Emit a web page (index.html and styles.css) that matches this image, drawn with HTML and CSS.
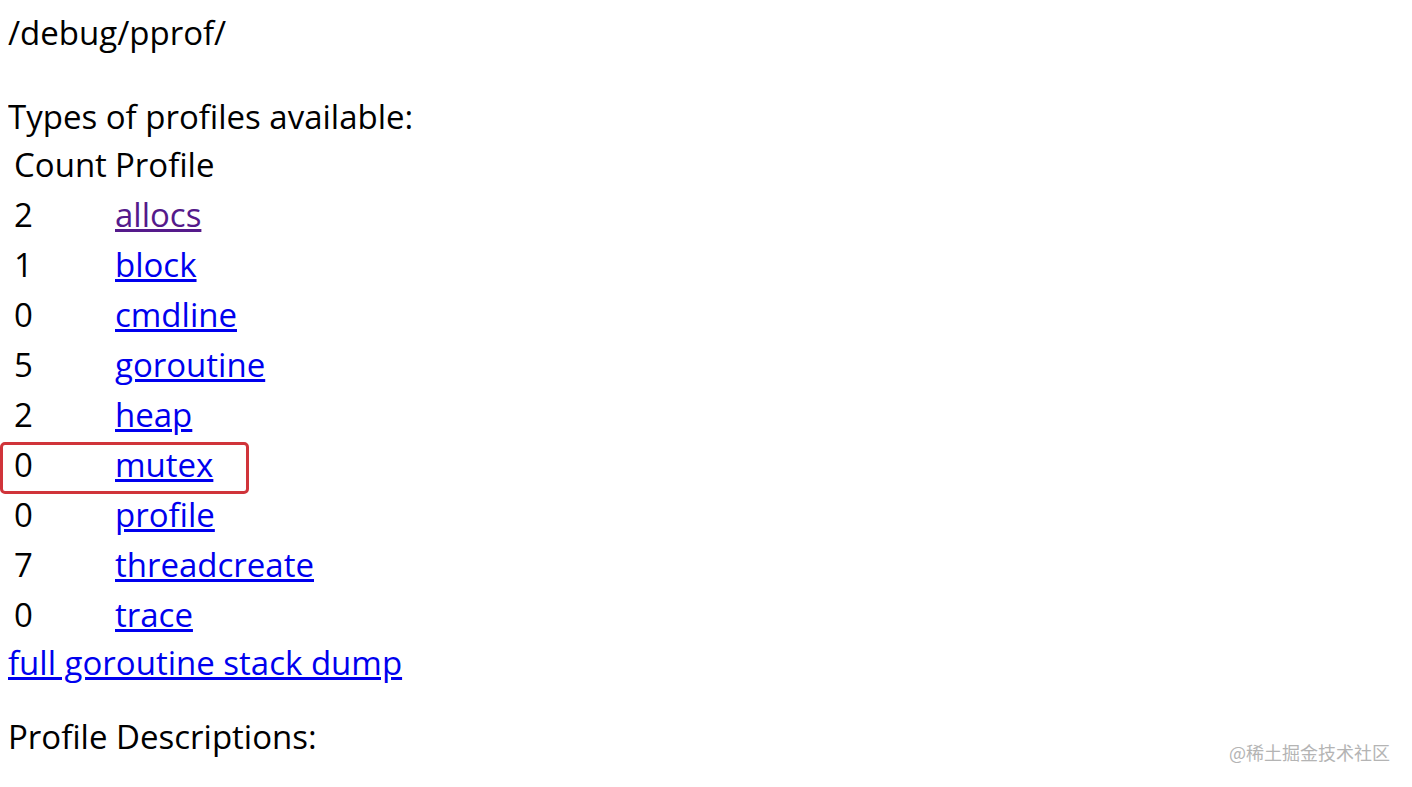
FILE: index.html
```html
<!DOCTYPE html>
<html lang="en">
    <head>
        <meta charset="UTF-8" />
        <title>/debug/pprof/</title>
        <link rel="stylesheet" href="styles.css">
    </head>
    <body>
        /debug/pprof/<br>
        <br>
        Types of profiles available:
        <table class="profiles">
            <thead>
                <tr><td class="count">Count</td><td>Profile</td></tr>
            </thead>
            <tbody>
                <tr><td class="count">2</td><td><a class="visited" href="#allocs">allocs</a></td></tr>
                <tr><td class="count">1</td><td><a href="#block">block</a></td></tr>
                <tr><td class="count">0</td><td><a href="#cmdline">cmdline</a></td></tr>
                <tr><td class="count">5</td><td><a href="#goroutine">goroutine</a></td></tr>
                <tr><td class="count">2</td><td><a href="#heap">heap</a></td></tr>
                <tr class="marked"><td class="count">0</td><td><a href="#mutex">mutex</a></td></tr>
                <tr><td class="count">0</td><td><a href="#profile">profile</a></td></tr>
                <tr><td class="count">7</td><td><a href="#threadcreate">threadcreate</a></td></tr>
                <tr><td class="count">0</td><td><a href="#trace">trace</a></td></tr>
            </tbody>
        </table>
        <a href="#goroutine-full">full goroutine stack dump</a>
        <br/>
        <p>
            Profile Descriptions:
        </p>

        <div class="highlight"></div>
        <div class="watermark">@稀土掘金技术社区</div>
    </body>
</html>
```

FILE: styles.css
```css
html {
    background-color: #fff;
}

body {
    margin: 12px 8px;
    font-family: "Open Sans", "Noto Sans", sans-serif;
    font-size: 33px;
    line-height: 42px;
    color: #000;
}

a {
    color: #0000ee;
}

a.visited {
    color: #551a8b;
}

p {
    margin: 32px 0;
}

.profiles {
    border-spacing: 4px;
    border-collapse: separate;
    font-size: inherit;
    line-height: inherit;
}

.profiles td {
    padding: 2px;
}

.profiles .count {
    width: 93px;
}

.highlight {
    position: absolute;
    left: 0;
    top: 442px;
    width: 243px;
    height: 46px;
    border: 3px solid #d0343a;
    border-radius: 5px;
}

.watermark {
    position: absolute;
    right: 22px;
    top: 740px;
    font-family: "Noto Sans CJK SC", sans-serif;
    font-size: 18px;
    line-height: 24px;
    color: #b4b4b4;
}
```
